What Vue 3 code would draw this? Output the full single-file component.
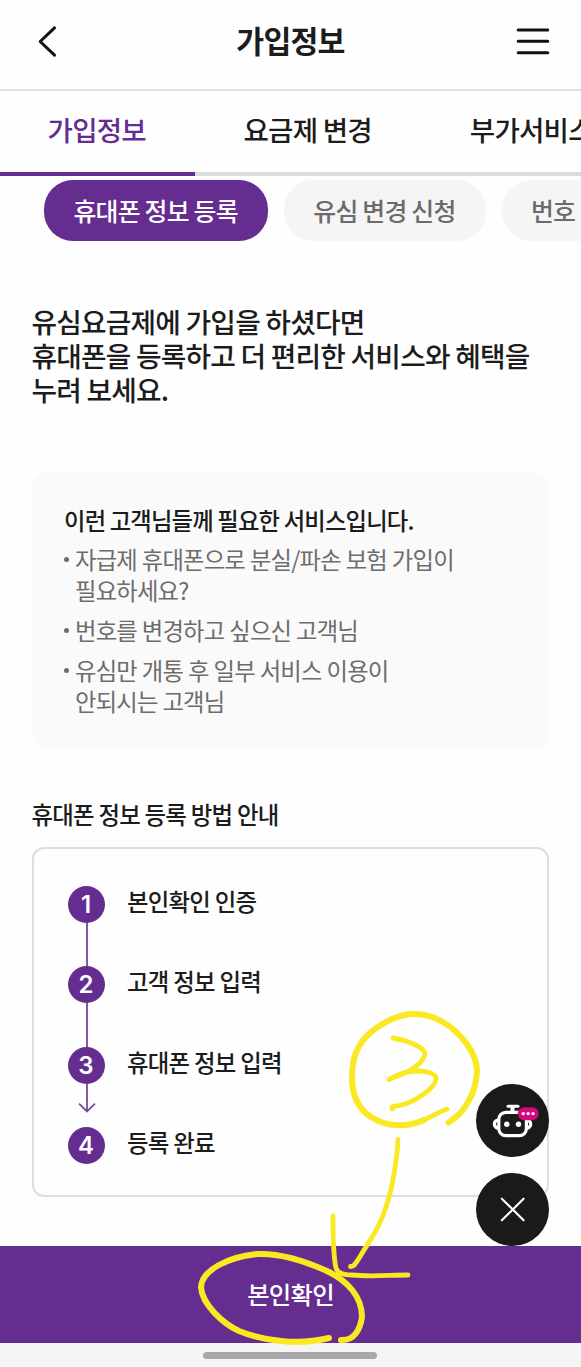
<template>
    <div class="page">
        <header class="header">
            <button class="icon-button" aria-label="이전">
                <svg width="24" height="34" viewBox="0 0 24 34">
                    <path d="M19.5 3.8 L5.2 17.5 L19.5 31.2" />
                </svg>
            </button>
            <h1>가입정보</h1>
            <button class="icon-button" aria-label="메뉴">
                <svg width="34" height="34" viewBox="0 0 34 34">
                    <path d="M2.2 6 H31.8 M2.2 17.3 H31.8 M2.2 28.8 H31.8" />
                </svg>
            </button>
        </header>

        <nav class="tabs">
            <button
                v-for="tab in tabs"
                :key="tab"
                :class="{ active: activeTab === tab }"
                @click="activeTab = tab"
            >
                {{ tab }}
            </button>
        </nav>

        <div class="pills">
            <button
                v-for="pill in pills"
                :key="pill"
                :class="{ active: activePill === pill }"
                @click="activePill = pill"
            >
                {{ pill }}
            </button>
        </div>

        <main class="content">
            <h2>유심요금제에 가입을 하셨다면<br>휴대폰을 등록하고 더 편리한 서비스와 혜택을<br>누려 보세요.</h2>

            <section class="info-card">
                <strong>이런 고객님들께 필요한 서비스입니다.</strong>
                <ul>
                    <li v-for="(item, index) in targets" :key="index">
                        <span v-for="line in item" :key="line">{{ line }}</span>
                    </li>
                </ul>
            </section>

            <h3>휴대폰 정보 등록 방법 안내</h3>

            <ol class="steps">
                <li v-for="(step, index) in steps" :key="step">
                    <div class="marker">
                        <span class="number">{{ index + 1 }}</span>
                        <span v-if="index < steps.length - 2" class="line"></span>
                        <svg v-else-if="index === steps.length - 2" class="arrow" width="20" height="30" viewBox="0 0 20 30">
                            <path d="M11 0 V27.5 M3 19.7 L11 27.5 L19 19.7" />
                        </svg>
                    </div>
                    <p>{{ step }}</p>
                </li>
            </ol>
        </main>

        <button class="confirm">본인확인</button>
        <div class="system-bar"><i></i></div>

        <!-- 플로팅 버튼 -->
        <div class="floating">
            <button aria-label="챗봇">
                <svg width="73" height="73" viewBox="0 0 73 73">
                    <g fill="none" stroke="#fff" stroke-width="3.2">
                        <rect x="22.8" y="28.3" width="27.6" height="23.3" rx="7" />
                        <path d="M36.5 22.5 V28" stroke-width="4" />
                        <path d="M32 22.3 H42" stroke-linecap="round" stroke-width="3" />
                        <path d="M22 36 Q18.4 37 18.4 40 T22 44.5 M51 36 Q54.7 37 54.7 40 T51 44.5" />
                    </g>
                    <circle cx="30.8" cy="40.2" r="2.7" fill="#fff" />
                    <circle cx="42.5" cy="40.2" r="2.7" fill="#fff" />
                    <rect x="41.7" y="23.2" width="21" height="13" rx="6.5" fill="#d5077c" />
                    <g fill="#fff">
                        <circle cx="47.3" cy="29.6" r="1.7" />
                        <circle cx="52.2" cy="29.6" r="1.7" />
                        <circle cx="57.1" cy="29.6" r="1.7" />
                    </g>
                </svg>
            </button>
            <button aria-label="닫기">
                <svg width="73" height="73" viewBox="0 0 73 73">
                    <path d="M25.8 25.7 L47.6 47.3 M47.6 25.7 L25.8 47.3" stroke="#fff" stroke-width="2.1" stroke-linecap="round" />
                </svg>
            </button>
        </div>

        <!-- 손글씨 표시 -->
        <svg class="ink" width="581" height="1367" viewBox="0 0 581 1367">
            <path class="thick" d="M448.5 1122.5 C466 1112 476 1092 477 1071 C477 1053 461 1033 443 1022 C426 1012 408 1012 392 1019 C368 1030 354 1047 352.5 1068 C350 1092 357 1108 371 1117 C388 1128 408 1127 424 1120" />
            <path d="M424 1120 C433 1116 439 1112 447 1109" />
            <path d="M393 1038 C407 1040 423 1047 425 1053 C425 1060 414 1069 407 1072 L389 1079.5 C398 1074 407 1071 418 1071 C429 1071 437 1075 436 1079 C435 1088 415 1103 397 1106 C393 1106 391.5 1107 392 1109" />
            <path d="M398 1139.5 C397 1161 392 1190 386 1207 C380 1227 370 1240 361 1255 C356 1263 354 1267 350.5 1266.5" />
            <path d="M333 1216 C333 1237 333 1255 336 1268 C338 1274 344 1275 352 1275 C371 1277 390 1275 408 1275" />
            <path class="thick" d="M341 1340 C353 1341 360 1331 362 1317 C362 1297 348 1281 327 1271 C305 1261 281 1253 257 1254 C228 1257 202 1270 201 1287 C202 1304 222 1323 239 1331 C266 1342 300 1345 329 1338" />
        </svg>
    </div>
</template>

<script setup>
import { ref } from 'vue'

const tabs = ['가입정보', '요금제 변경', '부가서비스']
const pills = ['휴대폰 정보 등록', '유심 변경 신청', '번호 변경']
const activeTab = ref(tabs[0])
const activePill = ref(pills[0])

// 안내 대상 (줄 단위)
const targets = [
    ['자급제 휴대폰으로 분실/파손 보험 가입이', '필요하세요?'],
    ['번호를 변경하고 싶으신 고객님'],
    ['유심만 개통 후 일부 서비스 이용이', '안되시는 고객님']
]

const steps = ['본인확인 인증', '고객 정보 입력', '휴대폰 정보 입력', '등록 완료']
</script>

<style>
body {
    margin: 0;
    background: #fefefe;
}
</style>

<style scoped>
.page {
    position: relative;
    display: flex;
    flex-direction: column;
    width: 581px;
    height: 1367px;
    overflow: hidden;
    background: #fefefe;
    color: #1c1c1c;
    font-family: 'Noto Sans CJK KR', sans-serif;
    font-weight: 500;
    letter-spacing: -0.05em;
    white-space: nowrap;
}

h1, h2, h3, p, ul, ol {
    margin: 0;
    padding: 0;
    list-style: none;
    font-weight: 500;
}

button {
    flex: none;
    padding: 0;
    border: none;
    background: transparent;
    color: inherit;
    font: inherit;
    letter-spacing: inherit;
    cursor: pointer;
}

svg {
    display: block;
}

.header {
    display: flex;
    align-items: center;
    justify-content: space-between;
    box-sizing: border-box;
    height: 91px;
    padding: 0 31px 7px 35px;
    border-bottom: 2px solid #e1e1e1;
}

.header h1 {
    padding: 0 0 3px 6px;
    font-size: 30.3px;
    font-weight: 700;
    line-height: 40px;
}

.icon-button path {
    fill: none;
    stroke: #111;
    stroke-width: 3;
    stroke-linecap: round;
    stroke-linejoin: round;
}

.tabs {
    display: flex;
    height: 85px;
}

.tabs button {
    box-sizing: border-box;
    padding: 0 49px 5px;
    border-bottom: 4px solid #dcdcdc;
    font-size: 27.6px;
}

.tabs button.active {
    width: 194.5px;
    padding: 0 1px 5px 0;
    border-color: #662d91;
    color: #662d91;
}

.pills {
    display: flex;
    gap: 16px;
    height: 61px;
    padding: 4px 0 0 44px;
}

.pills button {
    padding: 0 30px 2px 29.5px;
    border-radius: 29px;
    background: #f5f5f5;
    color: #6b6b6b;
    font-size: 24.9px;
}

.pills button.active {
    background: #662d91;
    color: #fff;
}

.content {
    flex: 1;
    padding: 63px 32px 0;
}

h2 {
    margin-left: -0.5px;
    font-size: 27.8px;
    line-height: 34px;
}

.info-card {
    box-sizing: border-box;
    height: 278px;
    margin-top: 66px;
    padding: 32px;
    border-radius: 16px;
    background: #fafafa;
}

.info-card strong {
    display: block;
    font-size: 23.3px;
    font-weight: 500;
    line-height: 32px;
}

.info-card ul {
    display: flex;
    flex-direction: column;
    gap: 9px;
    margin-top: 8px;
    color: #6c6c6c;
    font-size: 23.3px;
    font-weight: 400;
    line-height: 31px;
    word-spacing: 0.5px;
}

.info-card li {
    position: relative;
    padding-left: 11px;
}

.info-card li::before {
    content: '';
    position: absolute;
    top: 13px;
    left: 0;
    width: 5px;
    height: 5px;
    border-radius: 50%;
    background: #6c6c6c;
}

.info-card li span {
    display: block;
}

h3 {
    margin-top: 47px;
    margin-left: -0.5px;
    font-size: 23.4px;
    line-height: 34px;
    word-spacing: 0.3px;
}

.steps {
    box-sizing: border-box;
    height: 350px;
    margin-top: 16px;
    padding: 37px 33px;
    border: 2px solid #dedede;
    border-radius: 12px;
}

.steps li {
    display: flex;
    gap: 22px;
    height: 80.3px;
}

.marker {
    display: flex;
    flex-direction: column;
    align-items: center;
    width: 38px;
}

.number {
    flex: none;
    width: 37px;
    height: 37px;
    border-radius: 50%;
    background: #662d91;
    color: #fff;
    font-family: Inter, sans-serif;
    font-size: 24px;
    font-weight: 600;
    line-height: 37px;
    letter-spacing: 0;
    text-align: center;
}

.line {
    flex: 1;
    width: 2px;
    margin-left: 2px;
    background: #8458a6;
}

.arrow path {
    fill: none;
    stroke: #7a4a9f;
    stroke-width: 1.8;
}

.steps p {
    margin-top: -2px;
    font-size: 23.4px;
    line-height: 34px;
    word-spacing: 0.4px;
}

.confirm {
    height: 97px;
    padding-bottom: 3px;
    background: #662d91;
    color: #fff;
    font-size: 24.4px;
}

.system-bar {
    flex: none;
    display: flex;
    justify-content: center;
    box-sizing: border-box;
    height: 24px;
    padding-top: 9px;
    background: #f5f5f5;
}

.system-bar i {
    width: 174px;
    height: 7px;
    margin-right: 1px;
    border-radius: 4px;
    background: #a9a9a9;
}

.floating {
    position: absolute;
    top: 1084px;
    right: 32px;
    display: flex;
    flex-direction: column;
    gap: 16px;
}

.floating button {
    width: 73px;
    height: 73px;
    border-radius: 50%;
    background: #1a1a1a;
}

.ink {
    position: absolute;
    top: 0;
    left: 0;
    pointer-events: none;
}

.ink path {
    fill: none;
    stroke: #fae822;
    stroke-width: 4.8;
    stroke-linecap: round;
    stroke-linejoin: round;
}

.ink .thick {
    stroke-width: 6;
}
</style>
